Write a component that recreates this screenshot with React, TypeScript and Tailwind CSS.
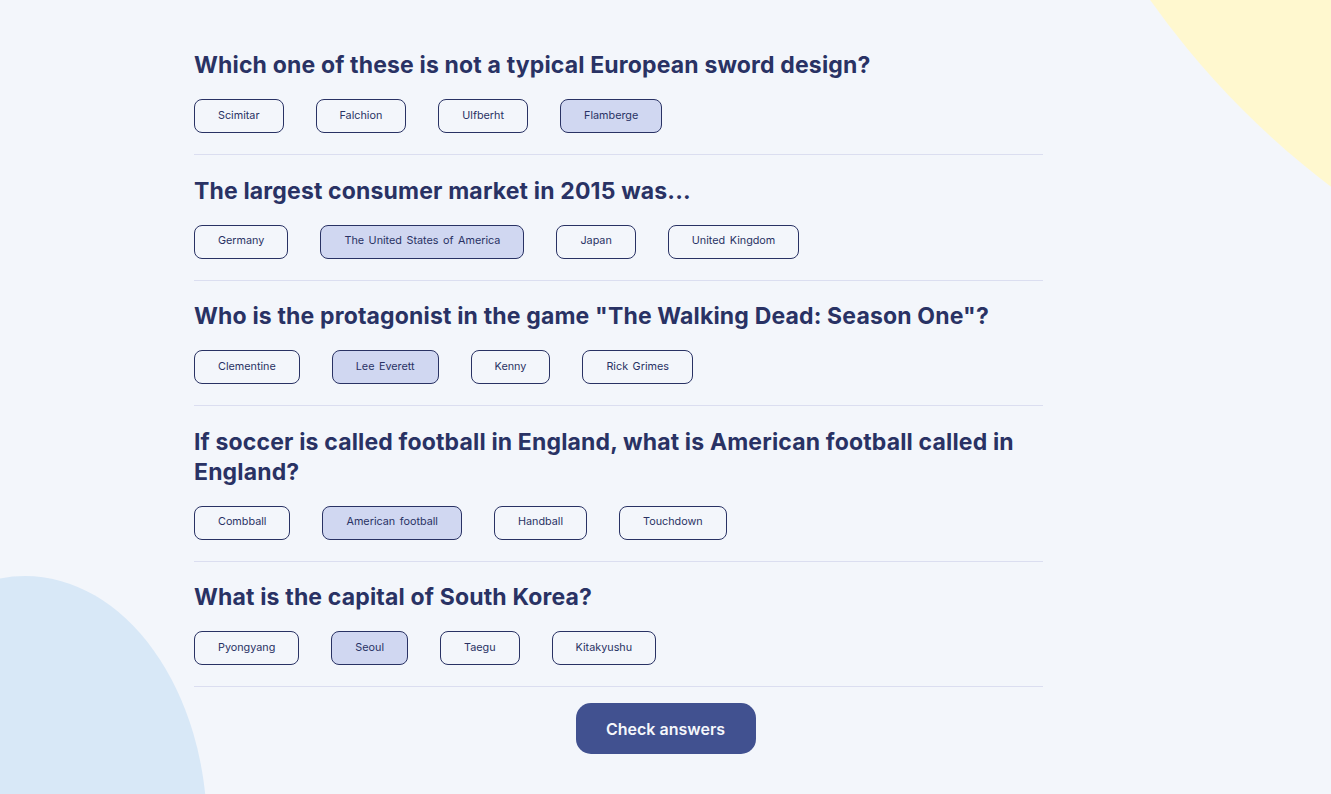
import React from "react";

const questions = [
  {
    q: "Which one of these is not a typical European sword design?",
    answers: ["Scimitar", "Falchion", "Ulfberht", "Flamberge"],
    selected: 3,
  },
  {
    q: "The largest consumer market in 2015 was...",
    answers: ["Germany", "The United States of America", "Japan", "United Kingdom"],
    selected: 1,
  },
  {
    q: 'Who is the protagonist in the game "The Walking Dead: Season One"?',
    answers: ["Clementine", "Lee Everett", "Kenny", "Rick Grimes"],
    selected: 1,
  },
  {
    q: "If soccer is called football in England, what is American football called in England?",
    answers: ["Combball", "American football", "Handball", "Touchdown"],
    selected: 1,
  },
  {
    q: "What is the capital of South Korea?",
    answers: ["Pyongyang", "Seoul", "Taegu", "Kitakyushu"],
    selected: 1,
  },
];

export default function App() {
  return (
    <div className="relative min-h-[794px] h-[794px] w-full overflow-hidden bg-[#F3F6FB] text-[#293264]">
      <div className="absolute left-[994px] top-[-1341px] h-[1700px] w-[1700px] rounded-full bg-[#FFF8CF]" />
      <div className="absolute left-[-157px] top-[576px] h-[508px] w-[364px] rounded-[50%] bg-[#D8E8F7]" />
      <div className="relative mx-auto flex w-[943px] flex-col pt-[50px]">
        <div className="flex w-[849px] flex-col">
          {questions.map((item, i) => (
            <div key={i} className="flex flex-col">
              <h2
                className="text-[23px] font-bold leading-[30px] tracking-[0.16px]"
                style={{ fontFamily: "Inter, 'Liberation Sans', sans-serif" }}
              >
                {item.q}
              </h2>
              <div className="mt-[19px] flex flex-row gap-[32px]">
                {item.answers.map((a, j) => (
                  <div
                    key={j}
                    className={
                      "flex h-[34px] items-center rounded-[8px] border border-[#293264] px-[23px] text-[10.8px] font-normal [word-spacing:1.5px] " +
                      (j === item.selected ? "border-[#4D5B9E] bg-[#D0D7F1]" : "")
                    }
                    style={{ fontFamily: "Inter, 'Liberation Sans', sans-serif" }}
                  >
                    {a}
                  </div>
                ))}
              </div>
              <div className="mb-[20.5px] mt-[21px] h-px w-full bg-[#DBDEF0]" />
            </div>
          ))}
        </div>
        <div className="flex justify-center">
          <button
            className="-mt-[4.5px] h-[51px] w-[180px] rounded-[15px] bg-[#415190] text-[16px] font-semibold text-[#F5F7FB]"
            style={{ fontFamily: "Inter, 'Liberation Sans', sans-serif" }}
          >
            Check answers
          </button>
        </div>
      </div>
    </div>
  );
}
